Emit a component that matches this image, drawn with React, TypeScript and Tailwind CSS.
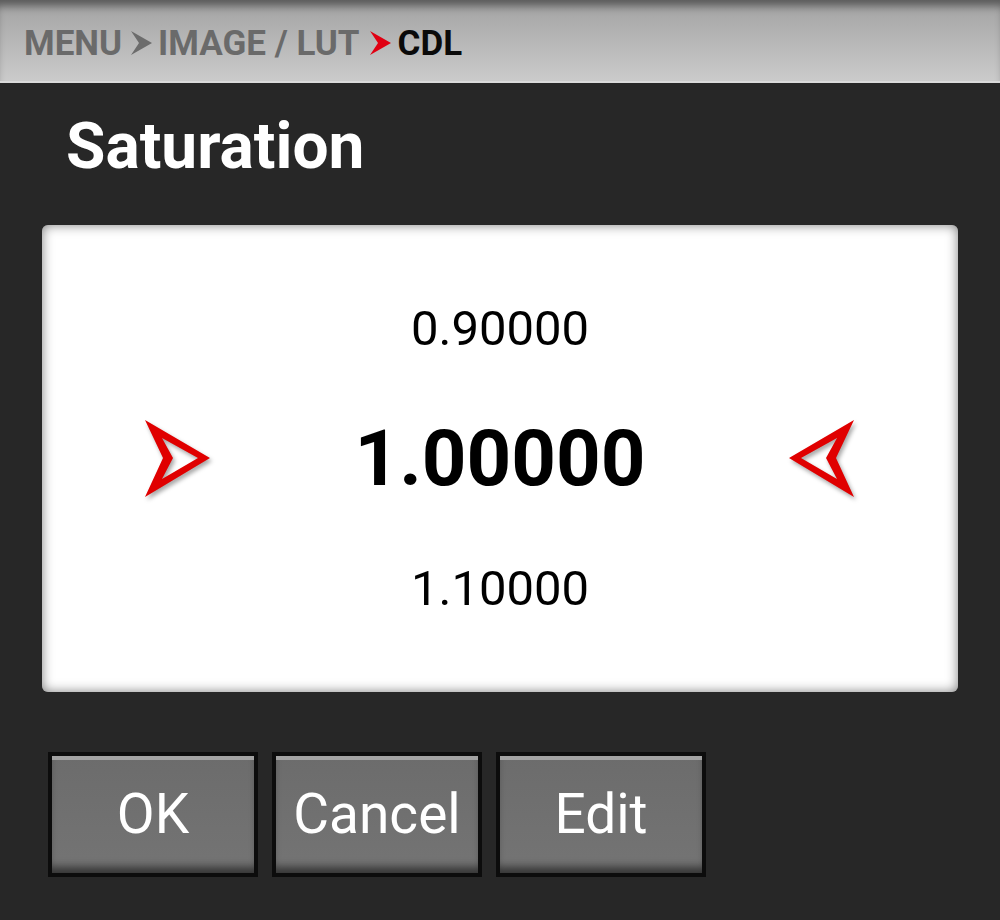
import React from "react";

function Crumb({ red }: { red?: boolean }) {
  return (
    <svg width="21" height="24" viewBox="0 0 21 24" className="shrink-0">
      <polygon points="0,0 21,12 0,24 8,12" fill={red ? "#e00012" : "#6c6c6c"} />
    </svg>
  );
}

function BigArrow({ dir }: { dir: "right" | "left" }) {
  const d =
    dir === "right"
      ? "M0 0 L65 38 L0 77 L18 38 Z M17 18 L28 38 L17 59 L53 38 Z"
      : "M65 0 L0 38 L65 77 L47 38 Z M48 18 L37 38 L48 59 L12 38 Z";
  return (
    <svg
      width="66"
      height="78"
      viewBox="0 0 66 78"
      className="shrink-0 overflow-visible drop-shadow-[2px_3px_2px_rgba(0,0,0,0.35)]"
    >
      <path d={d} fill="#e00000" fillRule="evenodd" />
    </svg>
  );
}

function Btn({ label }: { label: string }) {
  return (
    <div className="w-[210px] h-[125px] border-4 border-[#0c0c0c] bg-gradient-to-b from-[#6c6c6c] to-[#747474] shadow-[inset_0_4px_0_#a2a2a2,inset_0_-10px_8px_-4px_rgba(0,0,0,0.55)] flex items-center justify-center">
      <span className="text-white text-[55px] leading-none font-normal">{label}</span>
    </div>
  );
}

export default function App() {
  return (
    <div
      className="w-[1000px] h-[920px] bg-[#272727] overflow-hidden flex flex-col"
      style={{ fontFamily: "Roboto, 'Liberation Sans', sans-serif" }}
    >
      <div className="h-[83px] shrink-0 bg-gradient-to-b from-[#a2a2a2] to-[#cbcbcb] shadow-[inset_0_10px_8px_-4px_rgba(0,0,0,0.45)] border-b-2 border-[#dadada] flex items-center pl-[24px] pt-[5px]">
        <span className="text-[35px] leading-none font-bold text-[#6a6a6a]">MENU</span>
        <span className="ml-[9px] mr-[6px] flex"><Crumb /></span>
        <span className="text-[35px] leading-none font-bold text-[#6a6a6a]">IMAGE / LUT</span>
        <span className="ml-[10px] mr-[7px] flex"><Crumb red /></span>
        <span className="text-[35px] leading-none font-bold text-[#0a0a0a]">CDL</span>
      </div>

      <div className="pl-[66px] mt-[32px] h-[62px]">
        <span className="text-[64px] leading-none font-bold text-white">Saturation</span>
      </div>

      <div className="mx-[42px] mt-[48px] h-[467px] rounded-[6px] bg-white shadow-[inset_0_0_12px_rgba(0,0,0,0.5)] flex flex-col items-center justify-center">
        <div className="h-[60px] flex items-center text-[49px] leading-none text-black">0.90000</div>
        <div className="mt-[50px] h-[100px] w-full flex items-center justify-between px-[103px]">
          <BigArrow dir="right" />
          <span className="text-[78px] leading-none font-bold text-black">1.00000</span>
          <BigArrow dir="left" />
        </div>
        <div className="mt-[50px] h-[60px] flex items-center text-[49px] leading-none text-black">1.10000</div>
      </div>

      <div className="mt-[60px] pl-[48px] flex gap-[14px]">
        <Btn label="OK" />
        <Btn label="Cancel" />
        <Btn label="Edit" />
      </div>
    </div>
  );
}
